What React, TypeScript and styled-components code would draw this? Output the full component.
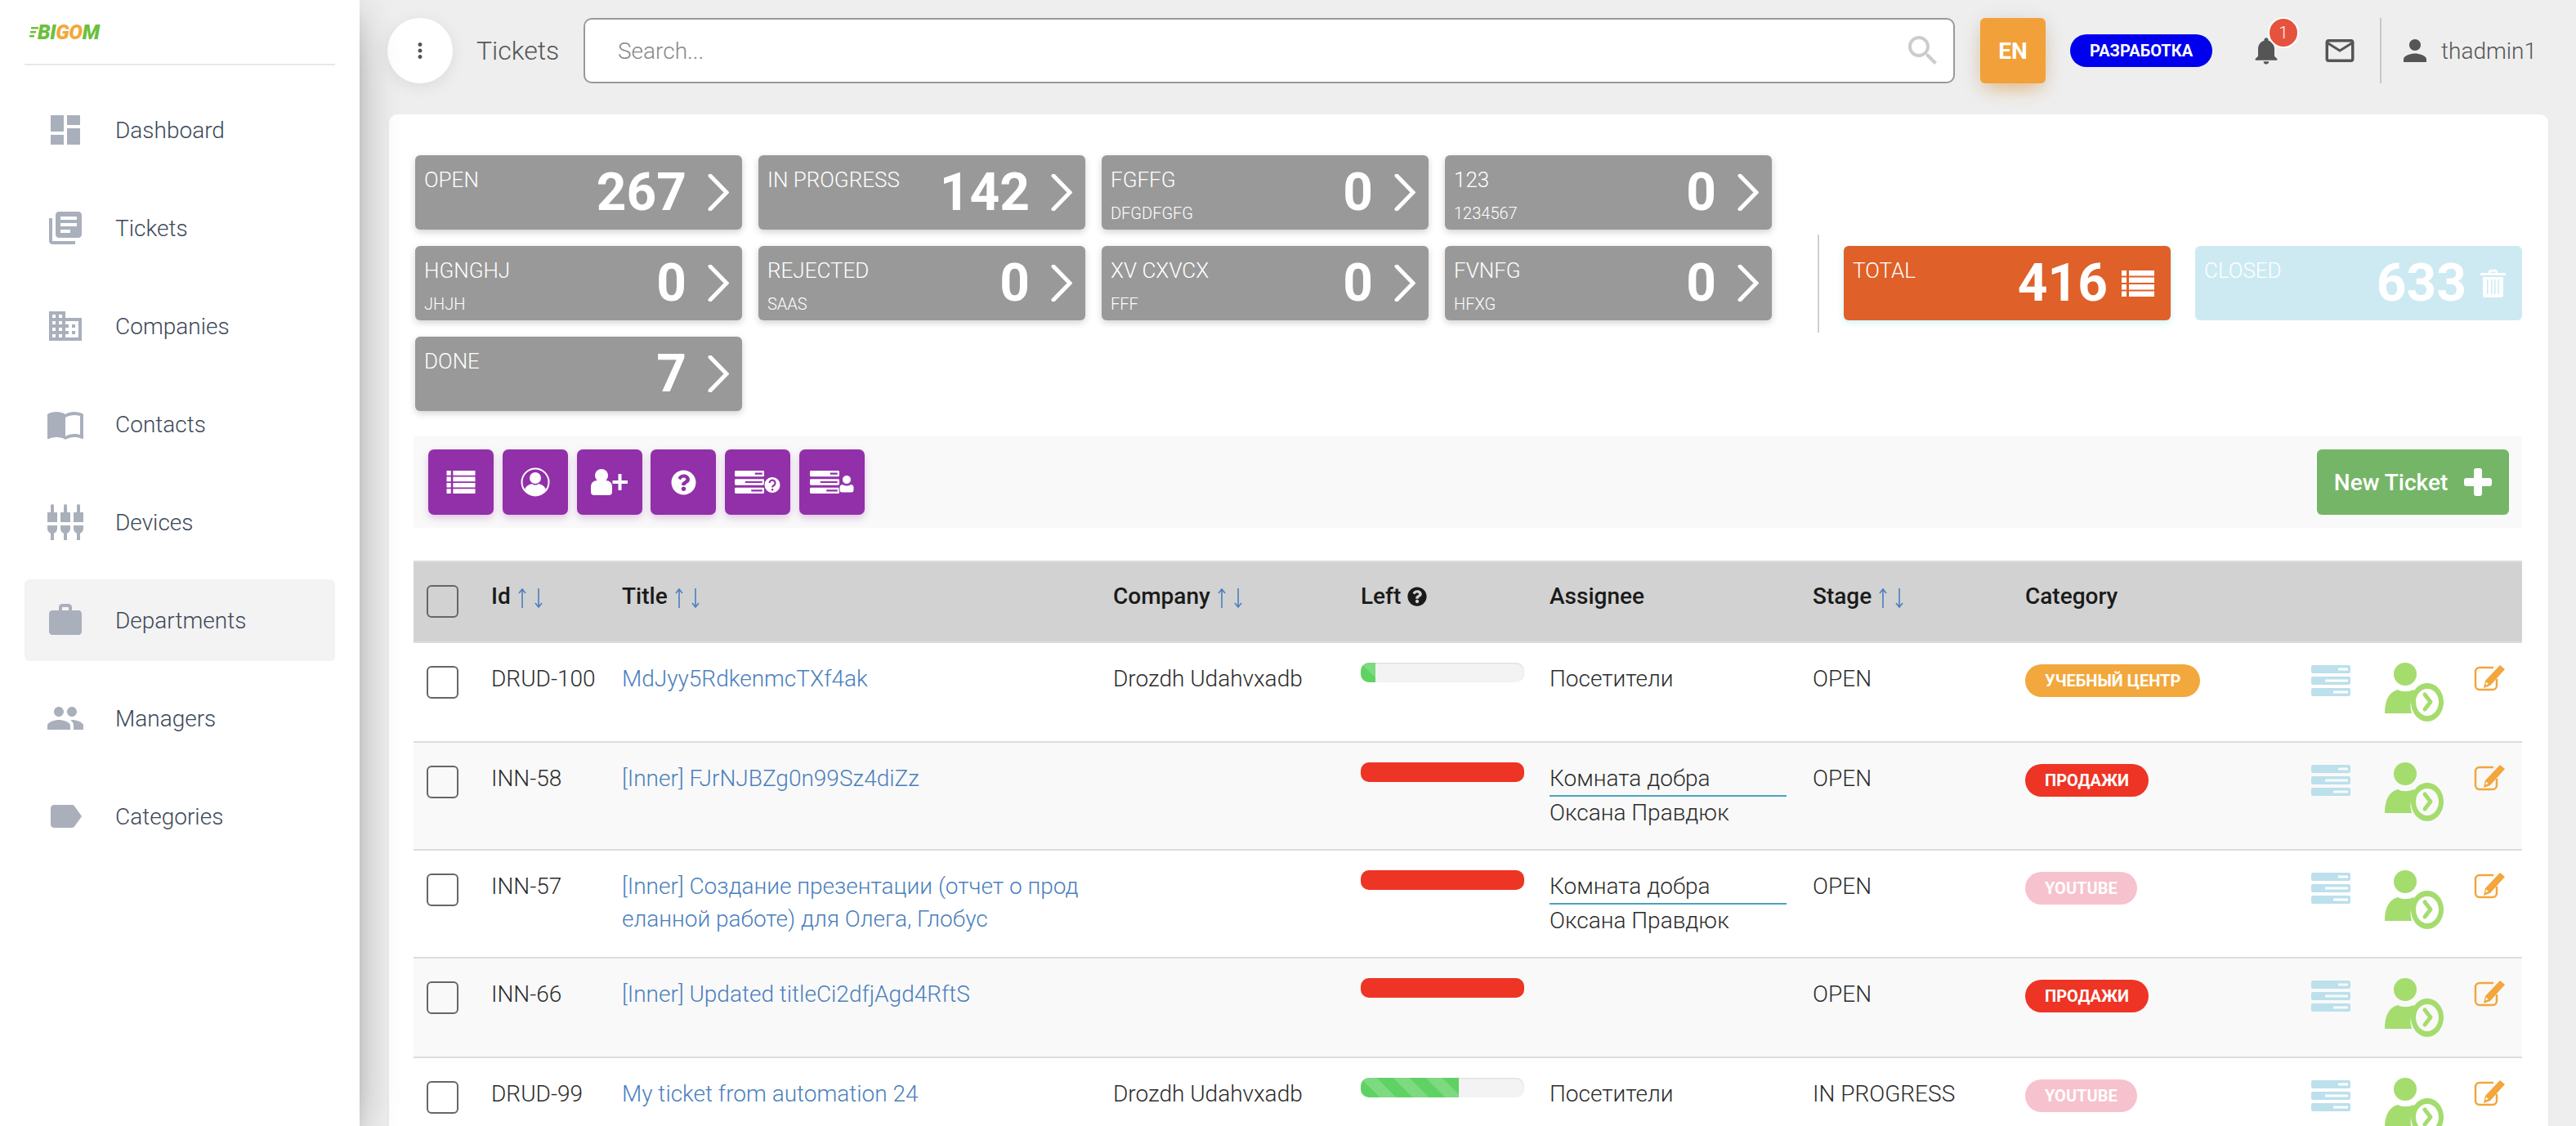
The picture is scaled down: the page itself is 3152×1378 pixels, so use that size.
import React from 'react';
import styled, { createGlobalStyle } from 'styled-components';
import {
    MdBusiness,
    MdDashboard,
    MdImportContacts,
    MdLabel,
    MdLibraryBooks,
    MdMailOutline,
    MdMoreVert,
    MdNotifications,
    MdPeople,
    MdPerson,
    MdSearch,
    MdSettingsInputComposite,
    MdWork,
} from 'react-icons/md';
import { FaQuestionCircle } from 'react-icons/fa';

const GlobalStyle = createGlobalStyle`
    html, body {
        margin: 0;
        height: 100%;
        overflow: hidden;
        background: #eeeeee;
        font-family: Roboto, "Liberation Sans", sans-serif;
        font-weight: 300;
    }
    * {
        box-sizing: border-box;
    }
`;

const Layout = styled.div`
    display: flex;
    height: 1378px;
    overflow: hidden;
`;

const Sidebar = styled.aside`
    position: relative;
    z-index: 2;
    flex: 0 0 440px;
    padding: 0 30px;
    background: #fff;
    box-shadow: 0 20px 60px -24px rgba(0, 0, 0, 0.42), 0 8px 50px rgba(0, 0, 0, 0.12), 0 16px 20px -10px rgba(0, 0, 0, 0.2);
`;

const LogoRow = styled.div`
    display: flex;
    align-items: center;
    height: 80px;
    padding: 0 0 0 6px;
    border-bottom: 2px solid #e8e8e8;
`;

const LogoText = styled.span`
    margin-left: -1px;
    font-size: 25px;
    font-weight: 900;
    font-style: italic;
    letter-spacing: -0.4px;
    color: #6cbf3c;
`;

const LogoAccent = styled.span`
    color: #f2a83c;
`;

const NavList = styled.nav`
    display: flex;
    flex-direction: column;
    gap: 20px;
    margin-top: 29px;
`;

const NavItem = styled.div<{ $active?: boolean }>`
    display: flex;
    align-items: center;
    height: 100px;
    padding-left: 26px;
    border-radius: 6px;
    background: ${({ $active }) => ($active ? '#f3f3f3' : 'transparent')};
    color: #3c4858;
    font-size: 28px;

    svg {
        flex: none;
        margin-right: 37px;
        color: #a9afbb;
    }
`;

const Main = styled.main`
    flex: 1;
    min-width: 0;
    padding: 22px 34px 0 36px;
`;

const TopBar = styled.header`
    display: flex;
    align-items: center;
    height: 80px;
    margin: 0 14px 0 -2px;
`;

const MenuCircle = styled.div`
    display: flex;
    flex: none;
    align-items: center;
    justify-content: center;
    width: 80px;
    height: 80px;
    border-radius: 50%;
    background: #fff;
    box-shadow: 0 4px 20px rgba(0, 0, 0, 0.08);
    color: #555;
`;

const PageTitle = styled.div`
    flex: none;
    width: 131px;
    margin-left: 29px;
    color: #555;
    font-size: 32px;
`;

const SearchBox = styled.div`
    display: flex;
    flex: 1;
    align-items: center;
    justify-content: space-between;
    height: 80px;
    padding: 0 13px 0 40px;
    border: 2px solid #999;
    border-radius: 10px;
    background: #fff;
    color: #888;
    font-size: 28px;

    svg {
        color: #ccc;
    }
`;

const LangButton = styled.div`
    display: flex;
    flex: none;
    align-items: center;
    justify-content: center;
    width: 80px;
    height: 80px;
    margin-left: 31px;
    border-radius: 6px;
    background: #f2a03a;
    box-shadow: 0 12px 24px -8px rgba(242, 160, 58, 0.6), 0 4px 24px rgba(0, 0, 0, 0.1);
    color: #fff;
    font-size: 28px;
    font-weight: 700;
`;

const EnvBadge = styled.div`
    display: flex;
    flex: none;
    align-items: center;
    justify-content: center;
    width: 174px;
    height: 40px;
    margin-left: 30px;
    border-radius: 20px;
    background: #0000ee;
    color: #fff;
    font-size: 20px;
    font-weight: 700;
`;

const BellWrap = styled.div`
    position: relative;
    display: flex;
    flex: none;
    margin-left: 46px;
    color: #555;
`;

const Bubble = styled.span`
    position: absolute;
    top: -21px;
    left: 22px;
    display: flex;
    align-items: center;
    justify-content: center;
    width: 38px;
    height: 38px;
    border: 2px solid #fff;
    border-radius: 50%;
    background: #e5533e;
    color: #fff;
    font-size: 20px;
`;

const MailWrap = styled.div`
    display: flex;
    flex: none;
    margin-left: 49px;
    color: #555;
`;

const UserBlock = styled.div`
    display: flex;
    flex: none;
    align-items: center;
    height: 80px;
    margin-left: 28px;
    padding-left: 20px;
    border-left: 2px solid #c8c8c8;
    color: #555;
    font-size: 28px;

    svg {
        margin-right: 11px;
    }
`;

const Card = styled.section`
    height: 1300px;
    margin-top: 38px;
    padding: 50px 32px 0 30px;
    border-radius: 10px;
    background: #fff;
    box-shadow: 0 2px 4px rgba(0, 0, 0, 0.04);
`;

const StatsRow = styled.div`
    display: flex;
    align-items: flex-start;
    margin-left: 2px;
`;

const StatGrid = styled.div`
    display: flex;
    flex: 0 0 1660px;
    flex-wrap: wrap;
    gap: 20px;
`;

const StatDivider = styled.div`
    flex: 0 0 2px;
    height: 120px;
    margin: 97px 0 0 56px;
    background: #cfcfcf;
`;

const TotalGroup = styled.div`
    display: flex;
    gap: 30px;
    margin: 111px 0 0 30px;
`;

const StatCard = styled.div<{ $bg?: string; $shadow?: string }>`
    display: flex;
    flex: 0 0 400px;
    justify-content: space-between;
    width: 400px;
    height: 91px;
    border-radius: 6px;
    background: ${({ $bg }) => $bg || '#999999'};
    box-shadow: ${({ $shadow }) => $shadow || '0 3px 8px rgba(0, 0, 0, 0.18)'};
    color: #fff;
`;

const StatLabels = styled.div`
    padding: 15px 0 0 11px;
`;

const StatLabel = styled.div`
    font-size: 26px;
    line-height: 30px;
`;

const StatSub = styled.div`
    margin-top: 14px;
    font-size: 20px;
    line-height: 24px;
`;

const StatValue = styled.div<{ $icon?: boolean }>`
    display: flex;
    align-items: center;
    gap: ${({ $icon }) => ($icon ? '17px' : '26px')};
    padding-right: ${({ $icon }) => ($icon ? '20px' : '16px')};
`;

const StatNumber = styled.span`
    font-size: 64px;
    font-weight: 700;
`;

const Toolbar = styled.div`
    display: flex;
    align-items: center;
    justify-content: space-between;
    height: 112px;
    margin-top: 31px;
    padding: 0 16px 0 18px;
    background: #f9f9f9;
`;

const ToolGroup = styled.div`
    display: flex;
    gap: 10.8px;
`;

const ToolButton = styled.button`
    display: flex;
    align-items: center;
    justify-content: center;
    width: 80px;
    height: 80px;
    padding: 0;
    border: none;
    border-radius: 7px;
    background: #9130a8;
    box-shadow: 0 4px 10px rgba(145, 48, 168, 0.25);
    color: #fff;
`;

const NewTicketButton = styled.button`
    display: flex;
    align-items: center;
    justify-content: center;
    gap: 20px;
    width: 235px;
    height: 80px;
    border: none;
    border-radius: 6px;
    background: #75b568;
    color: #fff;
    font-family: Roboto, "Liberation Sans", sans-serif;
    font-size: 28px;
    font-weight: 500;
`;

const Table = styled.table`
    width: 2580px;
    margin-top: 40px;
    border-collapse: separate;
    border-spacing: 0;
    table-layout: fixed;
`;

const Th = styled.th`
    height: 101px;
    padding: 22px 16px 0;
    border-top: 2px solid #dddddd;
    border-bottom: 2px solid #dddddd;
    background: #d2d2d2;
    color: #1a1a1a;
    font-size: 28px;
    font-weight: 500;
    line-height: 40px;
    text-align: left;
    vertical-align: top;
    white-space: nowrap;
`;

const Row = styled.tr`
    &:nth-child(even) td {
        background: #f9f9f9;
    }
`;

const Td = styled.td`
    padding: 24px 16px;
    border-bottom: 2px solid #dddddd;
    background: #fff;
    color: #2c2c2c;
    font-size: 28px;
    line-height: 40px;
    vertical-align: top;
`;

const CheckBox = styled.div<{ $head?: boolean }>`
    width: 39px;
    height: 40px;
    margin-top: ${({ $head }) => ($head ? '6px' : '4px')};
    border: 2px solid #666;
    border-radius: 6px;
`;

const TitleLink = styled.a`
    display: block;
    color: #4b7fbc;
    word-break: break-all;
`;

const SortIcon = styled.svg`
    margin-left: 8px;
    vertical-align: -5px;
`;

const HelpIcon = styled(FaQuestionCircle)`
    margin-left: 8px;
    vertical-align: -3px;
`;

const Progress = styled.div`
    width: 200px;
    height: 24px;
    overflow: hidden;
    border-radius: 10px;
    background: #f3f3f3;
    box-shadow: inset 0 1px 2px rgba(0, 0, 0, 0.1);
`;

const ProgressFill = styled.div<{ $red?: boolean }>`
    height: 100%;
    background-color: ${({ $red }) => ($red ? '#ee3424' : '#60d264')};
    background-image: ${({ $red }) =>
        $red
            ? 'none'
            : 'linear-gradient(45deg, rgba(255,255,255,.18) 25%, transparent 25%, transparent 50%, rgba(255,255,255,.18) 50%, rgba(255,255,255,.18) 75%, transparent 75%)'};
    background-size: 40px 40px;
`;

const AssigneeLine = styled.div<{ $lined?: boolean }>`
    ${({ $lined }) => $lined && 'border-bottom: 2px solid #4aa3bd;'}
`;

const Badge = styled.span<{ $bg: string }>`
    display: inline-block;
    height: 40px;
    margin-top: 2px;
    padding: 0 24px;
    border-radius: 20px;
    background: ${({ $bg }) => $bg};
    color: #fff;
    font-size: 20px;
    font-weight: 700;
    line-height: 40px;
    vertical-align: top;
`;

const Actions = styled.div`
    display: flex;
    align-items: flex-start;
`;

const ServerAction = styled.div`
    display: flex;
    margin: 3px 42px 0 0;
`;

const PersonAction = styled.div`
    display: flex;
    margin-right: 37px;
`;

const EditAction = styled.div`
    display: flex;
    margin-top: 3px;
`;

// three bars with a slot cut out of each, also used in the toolbar glyphs
const serverPath =
    'M2 0h44a2 2 0 0 1 2 2v6a2 2 0 0 1-2 2H2a2 2 0 0 1-2-2V2a2 2 0 0 1 2-2zM33 3.5v3h12v-3z' +
    'M2 14h44a2 2 0 0 1 2 2v6a2 2 0 0 1-2 2H2a2 2 0 0 1-2-2v-6a2 2 0 0 1 2-2zM17 17.5v3h28v-3z' +
    'M2 28h44a2 2 0 0 1 2 2v6a2 2 0 0 1-2 2H2a2 2 0 0 1-2-2v-6a2 2 0 0 1 2-2zM27 31.5v3h18v-3z';

const ServerIcon = () => (
    <svg width="48" height="38" viewBox="0 0 48 38">
        <path d={serverPath} fill="#bce0ec" fillRule="evenodd" />
    </svg>
);

const PersonArrowIcon = () => (
    <svg width="72" height="72" viewBox="0 0 72 72">
        <circle cx="25" cy="14" r="14" fill="#a5dc6e" />
        <path d="M0 62C0 46 5 36 16 33c5 3 13 3 19 0l2 3c-5 6-7 16-4 26z" fill="#a5dc6e" />
        <path
            d="M52 25c11 0 20 10 20 23s-9 24-20 24-20-11-20-24 9-23 20-23zm0 7c-8 0-14 7-14 16s6 17 14 17 14-8 14-17-6-16-14-16z"
            fill="#a5dc6e"
            fillRule="evenodd"
        />
        <path d="M49 39l7 9-7 9" fill="none" stroke="#a5dc6e" strokeWidth="5" strokeLinecap="round" strokeLinejoin="round" />
    </svg>
);

const EditIcon = () => (
    <svg width="38" height="32" viewBox="0 0 38 32">
        <path d="M24 3H7a5 5 0 0 0-5 5v17a5 5 0 0 0 5 5h16a5 5 0 0 0 5-5v-8" fill="none" stroke="#f2a63c" strokeWidth="2.500" />
        <path
            d="M32 0l6 5-18 20-8 3 2-9zM15 20.500l-.8 4 3.600-1.400z"
            fill="#f2a63c"
            fillRule="evenodd"
        />
    </svg>
);

const Chevron = () => (
    <svg width="26" height="45" viewBox="0 0 26 45">
        <path d="M3 2l20 20.500L3 43" fill="none" stroke="#fff" strokeWidth="5" strokeLinecap="round" strokeLinejoin="miter" />
    </svg>
);

const ListIcon = ({ width, height }: { width: number; height: number }) => (
    <svg width={width} height={height} viewBox="0 0 40 32">
        <path
            d="M0 0h6v6.500H0zM9 0h31v6.500H9zM0 8.500h6V15H0zM9 8.500h31V15H9zM0 17h6v6.500H0zM9 17h31v6.500H9zM0 25.500h6V32H0zM9 25.500h31V32H9z"
            fill="#fff"
        />
    </svg>
);

const TrashIcon = () => (
    <svg width="31" height="34" viewBox="0 0 31 34">
        <path
            d="M10 4V3a3 3 0 0 1 3-3h5a3 3 0 0 1 3 3v1h9a1 1 0 0 1 1 1v2H0V5a1 1 0 0 1 1-1zM12.500 4h6V2.500h-6z"
            fill="#fff"
            fillRule="evenodd"
        />
        <path
            d="M3 9h25v22a3 3 0 0 1-3 3H6a3 3 0 0 1-3-3zM8 12v18h1.500V12zM13 12v18h1.500V12zM17 12v18h1.500V12zM21.500 12v18H23V12z"
            fill="#fff"
            fillRule="evenodd"
        />
    </svg>
);

const PlusIcon = () => (
    <svg width="34" height="34" viewBox="0 0 34 34">
        <path d="M12 3a3 3 0 0 1 3-3h4a3 3 0 0 1 3 3v9h9a3 3 0 0 1 3 3v4a3 3 0 0 1-3 3h-9v9a3 3 0 0 1-3 3h-4a3 3 0 0 1-3-3v-9H3a3 3 0 0 1-3-3v-4a3 3 0 0 1 3-3h9z" fill="#fff" />
    </svg>
);

const SortArrows = () => (
    <SortIcon width="32" height="24" viewBox="0 0 32 24">
        <path d="M6 24V1M2 6l4-5 4 5M26 0v23M22 18l4 5 4-5" fill="none" stroke="#4b7fbc" strokeWidth="1.600" />
    </SortIcon>
);

const UserCircleIcon = () => (
    <svg width="36" height="36" viewBox="0 0 36 36">
        <circle cx="18" cy="18" r="16.500" fill="none" stroke="#fff" strokeWidth="2" />
        <circle cx="18" cy="13" r="7" fill="#fff" />
        <path d="M5 27c2-5 6-6 9-7 2 2 6 2 8 0 3 1 7 2 9 7-3 5-8 8-13 8s-10-3-13-8z" fill="#fff" />
    </svg>
);

const UserPlusIcon = () => (
    <svg width="45" height="32" viewBox="0 0 45 32">
        <circle cx="13" cy="8" r="8" fill="#fff" />
        <path d="M0 22c0-5 3-8 8-8h10c5 0 8 3 8 8v6a4 4 0 0 1-4 4H4a4 4 0 0 1-4-4z" fill="#fff" />
        <path d="M33.500 6h4v8H45v4h-7.500v8h-4v-8H26.500v-4h7z" fill="#fff" />
    </svg>
);

const ServerQuestionIcon = () => (
    <svg width="56" height="28" viewBox="0 0 56 28">
        <path d={serverPath} transform="scale(0.75 0.737)" fill="#fff" fillRule="evenodd" />
        <circle cx="46" cy="17.500" r="10" fill="#fff" stroke="#9130a8" strokeWidth="1" />
        <path d="M42.500 15a3.500 3.500 0 1 1 5.500 3c-1.200.8-2 1.200-2 2.500" fill="none" stroke="#9130a8" strokeWidth="2.200" />
        <rect x="45" y="22" width="2.200" height="2.400" fill="#9130a8" />
    </svg>
);

const ServerPersonIcon = () => (
    <svg width="54" height="28" viewBox="0 0 54 28">
        <path d={serverPath} transform="scale(0.75 0.737)" fill="#fff" fillRule="evenodd" />
        <circle cx="45" cy="11" r="5.500" fill="#fff" stroke="#9130a8" strokeWidth="1" />
        <path d="M36 20a4 4 0 0 1 4-3.500c2 2 8 2 10 0a4 4 0 0 1 4 3.500v4a3 3 0 0 1-3 3H39a3 3 0 0 1-3-3z" fill="#fff" stroke="#9130a8" strokeWidth="1" />
    </svg>
);

const LogoLines = () => (
    <svg width="11" height="14" viewBox="0 0 11 14">
        <rect x="2" y="1" width="9" height="2.500" fill="#6cbf3c" />
        <rect x="1" y="6" width="7" height="2.500" fill="#6cbf3c" />
        <rect x="0" y="11" width="6" height="2.500" fill="#6cbf3c" />
    </svg>
);

const navItems = [
    { label: 'Dashboard', icon: MdDashboard },
    { label: 'Tickets', icon: MdLibraryBooks },
    { label: 'Companies', icon: MdBusiness },
    { label: 'Contacts', icon: MdImportContacts },
    { label: 'Devices', icon: MdSettingsInputComposite },
    { label: 'Departments', icon: MdWork, active: true },
    { label: 'Managers', icon: MdPeople },
    { label: 'Categories', icon: MdLabel },
];

const stats = [
    { label: 'OPEN', value: 267 },
    { label: 'IN PROGRESS', value: 142 },
    { label: 'FGFFG', sub: 'DFGDFGFG', value: 0 },
    { label: '123', sub: '1234567', value: 0 },
    { label: 'HGNGHJ', sub: 'JHJH', value: 0 },
    { label: 'REJECTED', sub: 'SAAS', value: 0 },
    { label: 'XV CXVCX', sub: 'FFF', value: 0 },
    { label: 'FVNFG', sub: 'HFXG', value: 0 },
    { label: 'DONE', value: 7 },
];

const ORANGE = '#f2a83c';
const RED = '#ee3424';
const PINK = '#f6c2cd';

const tickets = [
    { id: 'DRUD-100', title: 'MdJyy5RdkenmcTXf4ak', company: 'Drozdh Udahvxadb', left: 9, assignee: ['Посетители'], stage: 'OPEN', category: 'УЧЕБНЫЙ ЦЕНТР', color: ORANGE },
    { id: 'INN-58', title: '[Inner] FJrNJBZg0n99Sz4diZz', company: '', left: 100, red: true, assignee: ['Комната добра', 'Оксана Правдюк'], stage: 'OPEN', category: 'ПРОДАЖИ', color: RED },
    { id: 'INN-57', title: '[Inner] Создание презентации (отчет о проделанной работе) для Олега, Глобус', company: '', left: 100, red: true, assignee: ['Комната добра', 'Оксана Правдюк'], stage: 'OPEN', category: 'YOUTUBE', color: PINK },
    { id: 'INN-66', title: '[Inner] Updated titleCi2dfjAgd4RftS', company: '', left: 100, red: true, assignee: [], stage: 'OPEN', category: 'ПРОДАЖИ', color: RED },
    { id: 'DRUD-99', title: 'My ticket from automation 24', company: 'Drozdh Udahvxadb', left: 60, assignee: ['Посетители'], stage: 'IN PROGRESS', category: 'YOUTUBE', color: PINK },
];

const columnWidths = [79, 160, 601, 303, 231, 322, 260, 350, 274];

const App = () => {
    return (
        <Layout>
            <GlobalStyle />
            <Sidebar>
                <LogoRow>
                    <LogoLines />
                    <LogoText>
                        BI<LogoAccent>GO</LogoAccent>M
                    </LogoText>
                </LogoRow>
                <NavList>
                    {navItems.map(({ label, icon: Icon, active }) => (
                        <NavItem key={label} $active={active}>
                            <Icon size={48} />
                            {label}
                        </NavItem>
                    ))}
                </NavList>
            </Sidebar>
            <Main>
                <TopBar>
                    <MenuCircle>
                        <MdMoreVert size={30} />
                    </MenuCircle>
                    <PageTitle>Tickets</PageTitle>
                    <SearchBox>
                        Search...
                        <MdSearch size={48} />
                    </SearchBox>
                    <LangButton>EN</LangButton>
                    <EnvBadge>РАЗРАБОТКА</EnvBadge>
                    <BellWrap>
                        <MdNotifications size={40} />
                        <Bubble>1</Bubble>
                    </BellWrap>
                    <MailWrap>
                        <MdMailOutline size={42} />
                    </MailWrap>
                    <UserBlock>
                        <MdPerson size={42} />
                        thadmin1
                    </UserBlock>
                </TopBar>
                <Card>
                    <StatsRow>
                        <StatGrid>
                            {stats.map((stat) => (
                                <StatCard key={stat.label}>
                                    <StatLabels>
                                        <StatLabel>{stat.label}</StatLabel>
                                        {stat.sub && <StatSub>{stat.sub}</StatSub>}
                                    </StatLabels>
                                    <StatValue>
                                        <StatNumber>{stat.value}</StatNumber>
                                        <Chevron />
                                    </StatValue>
                                </StatCard>
                            ))}
                        </StatGrid>
                        <StatDivider />
                        <TotalGroup>
                            <StatCard $bg="#df6028" $shadow="0 3px 8px rgba(0, 188, 212, 0.2)">
                                <StatLabels>
                                    <StatLabel>TOTAL</StatLabel>
                                </StatLabels>
                                <StatValue $icon>
                                    <StatNumber>416</StatNumber>
                                    <ListIcon width={40} height={32} />
                                </StatValue>
                            </StatCard>
                            <StatCard $bg="#cdeaf3" $shadow="none">
                                <StatLabels>
                                    <StatLabel>CLOSED</StatLabel>
                                </StatLabels>
                                <StatValue $icon>
                                    <StatNumber>633</StatNumber>
                                    <TrashIcon />
                                </StatValue>
                            </StatCard>
                        </TotalGroup>
                    </StatsRow>
                    <Toolbar>
                        <ToolGroup>
                            <ToolButton>
                                <ListIcon width={36} height={28} />
                            </ToolButton>
                            <ToolButton>
                                <UserCircleIcon />
                            </ToolButton>
                            <ToolButton>
                                <UserPlusIcon />
                            </ToolButton>
                            <ToolButton>
                                <FaQuestionCircle size={31} />
                            </ToolButton>
                            <ToolButton>
                                <ServerQuestionIcon />
                            </ToolButton>
                            <ToolButton>
                                <ServerPersonIcon />
                            </ToolButton>
                        </ToolGroup>
                        <NewTicketButton>
                            New Ticket
                            <PlusIcon />
                        </NewTicketButton>
                    </Toolbar>
                    <Table>
                        <colgroup>
                            {columnWidths.map((width, index) => (
                                <col key={index} width={width} />
                            ))}
                        </colgroup>
                        <thead>
                            <tr>
                                <Th>
                                    <CheckBox $head />
                                </Th>
                                <Th>
                                    Id
                                    <SortArrows />
                                </Th>
                                <Th>
                                    Title
                                    <SortArrows />
                                </Th>
                                <Th>
                                    Company
                                    <SortArrows />
                                </Th>
                                <Th>
                                    Left
                                    <HelpIcon size={24} />
                                </Th>
                                <Th>Assignee</Th>
                                <Th>
                                    Stage
                                    <SortArrows />
                                </Th>
                                <Th>Category</Th>
                                <Th />
                            </tr>
                        </thead>
                        <tbody>
                            {tickets.map((ticket) => (
                                <Row key={ticket.id}>
                                    <Td>
                                        <CheckBox />
                                    </Td>
                                    <Td>{ticket.id}</Td>
                                    <Td>
                                        <TitleLink>{ticket.title}</TitleLink>
                                    </Td>
                                    <Td>{ticket.company}</Td>
                                    <Td>
                                        <Progress>
                                            <ProgressFill $red={ticket.red} style={{ width: `${ticket.left}%` }} />
                                        </Progress>
                                    </Td>
                                    <Td>
                                        {ticket.assignee.map((name, index) => (
                                            <AssigneeLine key={name} $lined={ticket.assignee.length > 1 && index === 0}>
                                                {name}
                                            </AssigneeLine>
                                        ))}
                                    </Td>
                                    <Td>{ticket.stage}</Td>
                                    <Td>
                                        <Badge $bg={ticket.color}>{ticket.category}</Badge>
                                    </Td>
                                    <Td>
                                        <Actions>
                                            <ServerAction>
                                                <ServerIcon />
                                            </ServerAction>
                                            <PersonAction>
                                                <PersonArrowIcon />
                                            </PersonAction>
                                            <EditAction>
                                                <EditIcon />
                                            </EditAction>
                                        </Actions>
                                    </Td>
                                </Row>
                            ))}
                        </tbody>
                    </Table>
                </Card>
            </Main>
        </Layout>
    );
};

export default App;
